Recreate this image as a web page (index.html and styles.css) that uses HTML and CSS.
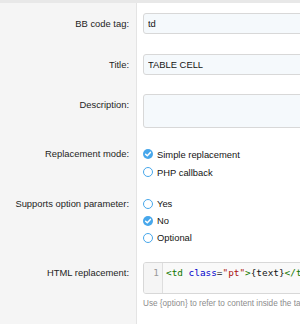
FILE: index.html
```html
<!DOCTYPE html>
<html lang="en">
<head>
    <meta charset="UTF-8">
    <meta name="viewport" content="width=device-width, initial-scale=1.0">
    <title>Edit BB code</title>
    <link rel="stylesheet" href="styles.css">
</head>
<body>

<!-- Bande du haut -->
<div class="topbar"></div>

<!-- Formulaire -->
<div class="form">
    <div class="row">
        <div class="label">BB code tag:</div>
        <div class="field"><input class="input" type="text" value="td"></div>
    </div>

    <div class="row">
        <div class="label">Title:</div>
        <div class="field"><input class="input" type="text" value="TABLE CELL"></div>
    </div>

    <div class="row row-desc">
        <div class="label">Description:</div>
        <div class="field"><textarea class="textarea"></textarea></div>
    </div>

    <div class="row row-radio">
        <div class="label label-tall">Replacement mode:</div>
        <div class="field">
            <div class="option tall"><span class="radio checked"><svg viewBox="0 0 10 10"><polyline points="2.6,5.2 4.3,6.8 7.4,3.4"/></svg></span>Simple replacement</div>
            <div class="option tall"><span class="radio"></span>PHP callback</div>
        </div>
    </div>

    <div class="row row-radio">
        <div class="label">Supports option parameter:</div>
        <div class="field">
            <div class="option"><span class="radio"></span>Yes</div>
            <div class="option"><span class="radio checked"><svg viewBox="0 0 10 10"><polyline points="2.6,5.2 4.3,6.8 7.4,3.4"/></svg></span>No</div>
            <div class="option"><span class="radio"></span>Optional</div>
        </div>
    </div>

    <div class="row row-code">
        <div class="label">HTML replacement:</div>
        <div class="field">
            <div class="code">
                <div class="gutter">1</div>
                <div class="lines"><span class="tag">&lt;td</span> <span class="attr">class</span>=<span class="str">"pt"</span><span class="tag">&gt;</span>{text}<span class="tag">&lt;/td&gt;</span></div>
            </div>
            <div class="hint">Use {option} to refer to content inside the tag's option value, if provided.</div>
        </div>
    </div>

    <div class="row row-fill">
        <div class="label"></div>
        <div class="field"></div>
    </div>
</div>

</body>
</html>
```

FILE: styles.css
```css
/* Style général */
body {
    margin: 0;
    font-family: 'Liberation Sans', Arial, sans-serif;
    font-size: 9.4px;
    color: #141414;
    background-color: #fff;
    overflow: hidden;
    display: flex;
    flex-direction: column;
    min-height: 100vh;
}

.topbar {
    height: 3px;
    background-color: #e8e8e8;
}

/* Formulaire */
.form {
    width: 600px;
    flex: 1;
    display: flex;
    flex-direction: column;
}

.row {
    display: flex;
}

.label {
    width: 129px;
    flex-shrink: 0;
    padding: 10px 7px 10px 0;
    background-color: #f5f5f5;
    border-right: 1px solid #e4e4e4;
    text-align: right;
    line-height: 21px;
    color: #242424;
}

.field {
    flex: 1;
    padding: 10px 0 10px 6px;
}

.row-desc .label,
.row-desc .field { padding-top: 9px; }

.row-radio .label,
.row-radio .field { padding-top: 7px; padding-bottom: 7px; }
.row-radio .label { line-height: 17px; }
.row-radio .label-tall { line-height: 18px; }

.row-code .label,
.row-code .field { padding-top: 9px; }

.row-fill { flex: 1; }

/* Champs */
.input,
.textarea {
    display: block;
    box-sizing: border-box;
    width: 400px;
    height: 21px;
    margin: 0;
    padding: 0 4px;
    border: 1px solid #d8d8d8;
    border-radius: 3px;
    background-color: #f5f9fc;
    font-family: inherit;
    font-size: 9.4px;
    color: #141414;
    outline: none;
}

.textarea {
    height: 34px;
    resize: none;
}

/* Boutons radio */
.option {
    display: flex;
    align-items: center;
    height: 17px;
}
.option.tall { height: 18px; }

.radio {
    box-sizing: border-box;
    width: 10px;
    height: 10px;
    margin-right: 4px;
    border: 1.4px solid #47a7eb;
    border-radius: 50%;
    background-color: #fff;
}

.radio.checked {
    background-color: #47a7eb;
    border: none;
}

.radio svg {
    display: block;
    width: 10px;
    height: 10px;
    fill: none;
    stroke: #fff;
    stroke-width: 1.5;
    stroke-linecap: round;
    stroke-linejoin: round;
}

/* Éditeur de code */
.code {
    display: flex;
    width: 400px;
    height: 32px;
    box-sizing: border-box;
    border: 1px solid #d8d8d8;
    border-radius: 3px;
    background-color: #f9f9f9;
    font-family: 'DejaVu Sans Mono', 'Liberation Mono', monospace;
    font-size: 9.4px;
    line-height: 14px;
    overflow: hidden;
}

.gutter {
    width: 15px;
    padding: 3px 3px 0 0;
    text-align: right;
    color: #999;
    background-color: #f5f5f5;
    border-right: 1px solid #dedede;
}

.lines {
    padding: 3px 0 0 3px;
    white-space: pre;
    color: #141414;
}

.tag { color: #170; }
.attr { color: #00c; }
.str { color: #a11; }

.hint {
    margin-top: 4px;
    font-size: 8.2px;
    line-height: 12px;
    color: #8c8c8c;
    white-space: nowrap;
}
```
